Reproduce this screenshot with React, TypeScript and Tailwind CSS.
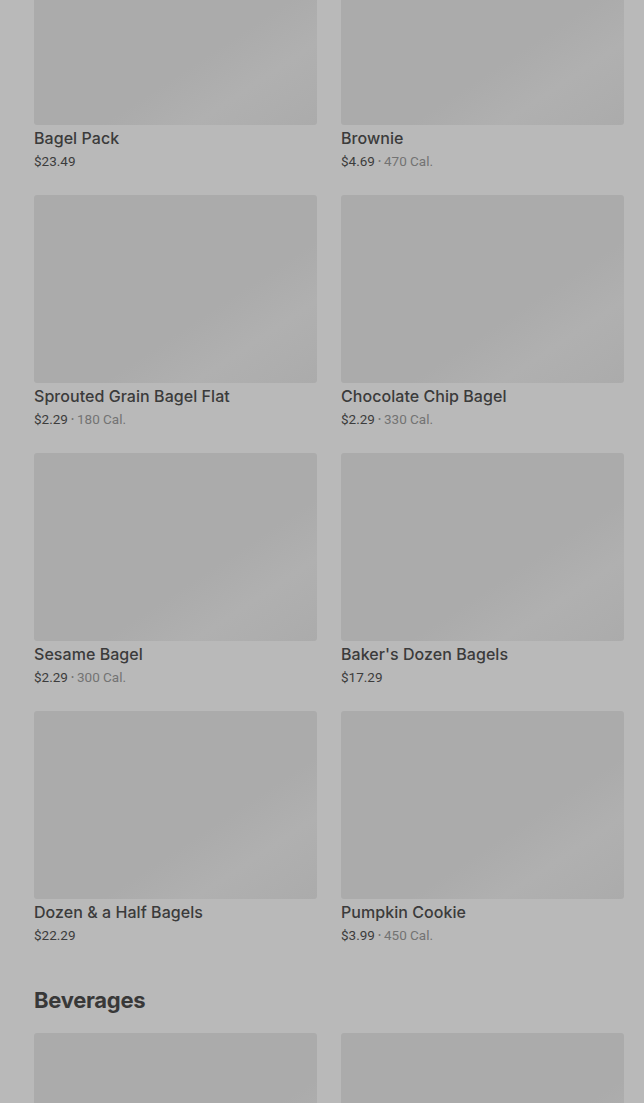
const items = [
  { name: 'Bagel Pack', price: '$23.49' },
  { name: 'Brownie', price: '$4.69', cal: '470 Cal.' },
  { name: 'Sprouted Grain Bagel Flat', price: '$2.29', cal: '180 Cal.' },
  { name: 'Chocolate Chip Bagel', price: '$2.29', cal: '330 Cal.' },
  { name: 'Sesame Bagel', price: '$2.29', cal: '300 Cal.' },
  { name: "Baker's Dozen Bagels", price: '$17.29' },
  { name: 'Dozen & a Half Bagels', price: '$22.29' },
  { name: 'Pumpkin Cookie', price: '$3.99', cal: '450 Cal.' },
]

function Skeleton({ className = '' }: { className?: string }) {
  return (
    <div
      className={`rounded-[3px] bg-[linear-gradient(to_bottom_right,#ababab_0%,#ababab_62%,#b0b0b0_78%,#adadad_92%,#ababab_100%)] ${className}`}
    />
  )
}

function Card({ name, price, cal, first }: { name: string; price: string; cal?: string; first?: boolean }) {
  return (
    <div className="flex flex-col">
      <Skeleton className={first ? 'h-[188px] -mt-[63px]' : 'h-[188px]'} />
      <div className="mt-[3px] h-5 text-[16px] leading-5 font-medium text-[#3b3b3b] font-['Inter',sans-serif] tracking-[0.05px]">
        {name}
      </div>
      <div className="mt-1 flex h-[18px] items-center text-[13.5px] leading-[18px] text-[#3c3c3c] font-['Roboto',sans-serif]">
        {price}
        {cal && (
          <span className="flex items-center text-[#737373]">
            <span className="mx-[3px] text-[9px]">•</span>
            {cal}
          </span>
        )}
      </div>
    </div>
  )
}

export default function App() {
  return (
    <div className="h-[1103px] bg-[#b9b9b9] overflow-hidden">
      <div className="ml-[34px] w-[590px]">
        <div className="grid grid-cols-2 gap-x-6 gap-y-[25px]">
          {items.map((it, i) => (
            <Card key={it.name} {...it} first={i < 2} />
          ))}
        </div>
        <h2 className="mt-10 mb-[17px] text-[22px] leading-8 font-bold tracking-[-0.3px] text-[#383838] font-['Inter',sans-serif]">
          Beverages
        </h2>
        <div className="grid grid-cols-2 gap-x-6">
          <Skeleton className="h-[188px]" />
          <Skeleton className="h-[188px]" />
        </div>
      </div>
    </div>
  )
}
